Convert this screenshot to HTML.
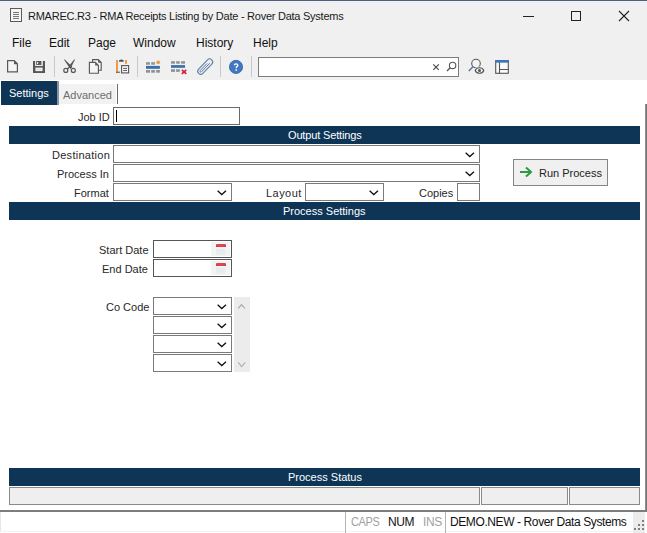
<!DOCTYPE html>
<html><head><meta charset="utf-8">
<style>
*{box-sizing:border-box;margin:0;padding:0}
html,body{width:647px;height:533px;overflow:hidden;background:#f0f0f0;font-family:"Liberation Sans",sans-serif;color:#000}
.a{position:absolute}
.t{position:absolute;white-space:pre;line-height:1}
.hdr{position:absolute;left:9px;width:631px;height:18px;background:#0e3556;color:#fff;font-size:11px}
.hdr span{position:absolute;white-space:pre;line-height:1}
.lbl{position:absolute;white-space:pre;line-height:1;font-size:11px;color:#282828;margin-top:-1px}
.inp{position:absolute;background:#fff;border:1px solid #7a7a7a;height:18px}
.sel{position:absolute;background:#fff;border:1px solid #7a7a7a;height:18px}
.chev{position:absolute;right:4px;top:6px}
.sep{position:absolute;top:56px;width:1px;height:21px;background:#b4b4b4}
.cell{position:absolute;top:487px;height:18px;background:#efefef;border:1px solid #8a8a8a}
</style></head><body>
<!-- top border -->
<div class="a" style="left:0;top:0;width:647px;height:1px;background:#525d74"></div>
<div class="a" style="left:0;top:1px;width:647px;height:1px;background:#eef4fb"></div>
<div class="a" style="left:0;top:2px;width:647px;height:1px;background:#e9ebf0"></div>

<!-- title icon -->
<svg class="a" style="left:9px;top:7px" width="15" height="17" viewBox="0 0 15 17">
<rect x="1.5" y="1.5" width="11" height="13" fill="#f6f6f6" stroke="#5a5a5a" stroke-width="1"/>
<path d="M4 5.5h6M4 7.5h6M4 9.5h6M4 11.5h6" stroke="#777" stroke-width="1"/>
</svg>
<div class="t" style="left:28px;top:11px;font-size:11px;color:#1a1a1a;letter-spacing:-0.25px">RMAREC.R3 - RMA Receipts Listing by Date - Rover Data Systems</div>

<!-- window controls -->
<div class="a" style="left:523px;top:16px;width:11px;height:1px;background:#222"></div>
<div class="a" style="left:571px;top:11px;width:10px;height:10px;border:1px solid #222"></div>
<svg class="a" style="left:618px;top:10px" width="12" height="12" viewBox="0 0 12 12"><path d="M1 1L11 11M11 1L1 11" stroke="#222" stroke-width="1.1"/></svg>

<!-- menu -->
<div class="t" style="left:12px;top:37px;font-size:12px;color:#111">File</div>
<div class="t" style="left:49px;top:37px;font-size:12px;color:#111">Edit</div>
<div class="t" style="left:88px;top:37px;font-size:12px;color:#111">Page</div>
<div class="t" style="left:133px;top:37px;font-size:12px;color:#111">Window</div>
<div class="t" style="left:196px;top:37px;font-size:12px;color:#111">History</div>
<div class="t" style="left:253px;top:37px;font-size:12px;color:#111">Help</div>

<!-- toolbar -->
<svg class="a" style="left:0;top:0" width="647" height="80" viewBox="0 0 647 80">
<!-- new -->
<path d="M7.6 60.6H14.2L17.4 63.8V71.9H7.6Z" fill="#f4f4f4" stroke="#595959" stroke-width="1.2"/>
<path d="M14 60.2V64.2H17.8Z" fill="#595959"/>
<!-- save -->
<path d="M33 61H45V73H33Z" fill="#565656"/>
<path d="M35.3 61H36V66.1H42V61H42.6V66.1H35.3Z" fill="#f0f0f0"/>
<path d="M35.3 61V66.1H42.6V61H41.4V64.9H36.2V61Z" fill="#f0f0f0"/>
<rect x="37" y="62" width="1.2" height="2.2" fill="#e6e6e6"/>
<rect x="35.4" y="67.6" width="7.2" height="3.5" fill="#f0f0f0"/>
<rect x="36.5" y="69" width="5" height="0.6" fill="#cfcfcf"/>
<!-- sep -->
<rect x="54" y="56" width="1" height="21" fill="#c9c9c9"/>
<!-- scissors -->
<path d="M63.9 59.5L64.8 59.5L72.4 67.1L70.3 69Z" fill="#565656"/>
<path d="M75 59.5L74.1 59.5L69.4 65.6L71.3 66.9Z" fill="#565656"/>
<path d="M67 69.2L69.6 66.9" stroke="#565656" stroke-width="1.3"/>
<circle cx="65.8" cy="70.4" r="2" fill="none" stroke="#585858" stroke-width="1.2"/>
<circle cx="73.3" cy="70.4" r="2" fill="none" stroke="#585858" stroke-width="1.2"/>
<!-- copy -->
<path d="M92.6 59.6H98.3L101.2 62.5V70.2H92.6Z" fill="#f4f4f4" stroke="#595959" stroke-width="1.15"/>
<path d="M98.1 59.3V62.7H101.5Z" fill="#595959"/>
<path d="M89.4 62.4H95.4L98.4 65.4V73.2H89.4Z" fill="#f4f4f4" stroke="#595959" stroke-width="1.15"/>
<path d="M95.2 62.1V65.6H98.7Z" fill="#595959"/>
<!-- paste -->
<rect x="116" y="60" width="2" height="11.8" fill="#ef9a3c"/>
<rect x="116" y="71.6" width="3.8" height="1.3" fill="#75624c"/>
<rect x="125" y="60" width="2" height="3.8" fill="#ef9a3c"/>
<path d="M119 61.7H123.7V60.6Q121.4 58.4 119 60.6Z" fill="#4a5560"/>
<rect x="121.6" y="65.6" width="7" height="7.3" fill="#f6f6f6" stroke="#555" stroke-width="1.1"/>
<path d="M123.3 68.4H127M123.3 70.5H127" stroke="#555" stroke-width="1"/>
<!-- sep -->
<rect x="137" y="56" width="1" height="21" fill="#c9c9c9"/>
<!-- insert row -->
<g fill="#939393">
<rect x="146" y="62.2" width="4" height="2.5"/><rect x="151.2" y="62.2" width="3.7" height="2.5"/>
<rect x="146" y="70" width="4" height="2.7"/><rect x="151.2" y="70" width="3.7" height="2.7"/><rect x="156.1" y="70" width="3.8" height="2.7"/>
</g>
<circle cx="158.2" cy="62.3" r="1.9" fill="#e8a050"/>
<rect x="146" y="65.9" width="13.9" height="2.9" fill="#3a6fae"/>
<!-- delete row -->
<g fill="#939393">
<rect x="171" y="61.2" width="4" height="2.5"/><rect x="176.1" y="61.2" width="3.7" height="2.5"/><rect x="181.1" y="61.2" width="3.9" height="2.5"/>
<rect x="171" y="69.2" width="4" height="2.7"/><rect x="176.1" y="69.2" width="3.7" height="2.7"/>
</g>
<rect x="171" y="65.1" width="14" height="2.7" fill="#3a6fae"/>
<path d="M181.8 69.8L186.3 73.8M186.3 69.8L181.8 73.8" stroke="#d21c3c" stroke-width="1.6"/>
<!-- paperclip -->
<g transform="translate(205.2 66.6) rotate(-46)">
<rect x="-9.4" y="-3" width="18.8" height="6" rx="3" fill="#e4edf8" stroke="#62799a" stroke-width="1"/>
<path d="M3.5 -0.9H-6.3A0.9 0.9 0 0 0 -6.3 0.9H5.5" fill="none" stroke="#62799a" stroke-width="0.9"/>
</g>
<!-- sep -->
<rect x="220" y="56" width="1" height="21" fill="#c9c9c9"/>
<!-- help -->
<circle cx="236" cy="66.9" r="6.6" fill="#4176c0" stroke="#3563a6" stroke-width="0.8"/>
<path d="M234.4 65.3Q234.4 63.9 236.1 63.9Q237.8 63.9 237.8 65.2Q237.8 66.1 236.8 66.6Q236.2 67 236.2 68.2" fill="none" stroke="#fff" stroke-width="1.3"/>
<rect x="235.5" y="69.3" width="1.5" height="1.5" fill="#fff"/>
<!-- sep -->
<rect x="251" y="56" width="1" height="21" fill="#c9c9c9"/>
<!-- search box -->
<rect x="258.5" y="57.5" width="200" height="19" fill="#fff" stroke="#7c7c7c" stroke-width="1"/>
<path d="M433.3 64.3L438.8 69.8M438.8 64.3L433.3 69.8" stroke="#444" stroke-width="1.1"/>
<circle cx="452.6" cy="65.4" r="3.2" fill="none" stroke="#555" stroke-width="1.1"/>
<path d="M450.2 67.8L447 71" stroke="#555" stroke-width="1.3"/>
<!-- mag eye -->
<circle cx="476" cy="63.6" r="4.3" fill="#f2f4f8" stroke="#585858" stroke-width="1.1"/>
<path d="M472.9 66.8L468.8 71.1" stroke="#5a78a6" stroke-width="1.5"/>
<path d="M475 70.5C476.3 66.6 482.7 66.6 484 70.5C482.7 74.4 476.3 74.4 475 70.5Z" fill="#f0f0f0" stroke="#f0f0f0" stroke-width="2.4"/>
<path d="M475.2 70.5C476.5 66.8 482.5 66.8 483.8 70.5C482.5 74.2 476.5 74.2 475.2 70.5Z" fill="#f0f0f0" stroke="#555" stroke-width="1.1"/>
<circle cx="479.5" cy="70.5" r="1.5" fill="#555"/>
<!-- layout -->
<rect x="495.7" y="60.6" width="12.6" height="12.7" fill="#fafafa" stroke="#555" stroke-width="1.1"/>
<rect x="495.2" y="60.1" width="13.6" height="2.6" fill="#3a78c0"/>
<path d="M499.5 62.6V73.5M499.5 69.5H508.5" stroke="#555" stroke-width="1.1"/>
</svg>

<!-- content white -->
<div class="a" style="left:0;top:80px;width:647px;height:431px;background:#fff"></div>
<!-- right vertical gray bar -->
<div class="a" style="left:645px;top:104px;width:2px;height:407px;background:linear-gradient(to right,#999,#6a6a6a)"></div>

<!-- tabs -->
<div class="a" style="left:1px;top:81px;width:56px;height:24px;background:#0e3556"></div>
<div class="a" style="left:57px;top:81px;width:1.5px;height:24px;background:#8594a3"></div>
<div class="t" style="left:9px;top:88px;font-size:11px;color:#fff">Settings</div>
<div class="a" style="left:59px;top:84px;width:57px;height:20px;background:#f2f2f2"></div>
<div class="a" style="left:116.5px;top:84px;width:1.5px;height:20px;background:#6a6a6a"></div>
<div class="t" style="left:63px;top:90px;font-size:11px;color:#6d6d6d">Advanced</div>

<!-- Job ID -->
<div class="lbl" style="left:78px;top:113px">Job ID</div>
<div class="inp" style="left:113px;top:107px;width:127px;border-color:#6a6a6a"></div>
<div class="a" style="left:116px;top:110px;width:1px;height:12px;background:#000"></div>

<!-- Output Settings -->
<div class="hdr" style="top:126px"><span style="left:279px;top:4px;letter-spacing:-0.15px">Output Settings</span></div>

<div class="lbl" style="left:52px;top:151px;letter-spacing:0.28px">Destination</div>
<div class="sel" style="left:113px;top:145px;width:367px"><svg class="chev" width="10" height="6" viewBox="0 0 10 6"><path d="M0.6 0.8L4.8 4.6L9 0.8" fill="none" stroke="#111" stroke-width="1.3"/></svg></div>
<div class="lbl" style="left:57px;top:170px">Process In</div>
<div class="sel" style="left:113px;top:164px;width:367px"><svg class="chev" width="10" height="6" viewBox="0 0 10 6"><path d="M0.6 0.8L4.8 4.6L9 0.8" fill="none" stroke="#111" stroke-width="1.3"/></svg></div>
<div class="lbl" style="left:74px;top:189px">Format</div>
<div class="sel" style="left:113px;top:183px;width:119px"><svg class="chev" width="10" height="6" viewBox="0 0 10 6"><path d="M0.6 0.8L4.8 4.6L9 0.8" fill="none" stroke="#111" stroke-width="1.3"/></svg></div>
<div class="lbl" style="left:266px;top:189px;letter-spacing:0.45px">Layout</div>
<div class="sel" style="left:305px;top:183px;width:79px"><svg class="chev" width="10" height="6" viewBox="0 0 10 6"><path d="M0.6 0.8L4.8 4.6L9 0.8" fill="none" stroke="#111" stroke-width="1.3"/></svg></div>
<div class="lbl" style="left:419px;top:189px">Copies</div>
<div class="inp" style="left:457px;top:183px;width:23px"></div>

<!-- Run process button -->
<div class="a" style="left:513px;top:159px;width:95px;height:27px;background:#f0f0f0;border:1px solid #858585"></div>
<svg class="a" style="left:519px;top:166px" width="14" height="12" viewBox="0 0 14 12"><path d="M1 6H12M7 1.5L12 6L7 10.5" fill="none" stroke="#2e9a3e" stroke-width="2"/></svg>
<div class="t" style="left:539px;top:168px;font-size:11px;color:#222">Run Process</div>

<!-- Process Settings -->
<div class="hdr" style="top:202px"><span style="left:274px;top:4px">Process Settings</span></div>

<div class="lbl" style="left:99px;top:246px">Start Date</div>
<div class="inp" style="left:153px;top:240px;width:79px;height:18px;border-color:#555"></div>
<svg class="a" style="left:211px;top:242px" width="19" height="14" viewBox="0 0 19 14"><rect x="0" y="0" width="19" height="14" fill="#f2f4f4"/><rect x="5" y="2" width="10" height="3" rx="1" fill="#dd4450"/><rect x="5" y="4" width="1.2" height="1" fill="#9a4048"/><rect x="13.8" y="4" width="1.2" height="1" fill="#9a4048"/><path d="M5 7.3H14.5M5 8.8H14.5M5 10.3H14.5M5 12H14.5" stroke="#dfe4e8" stroke-width="0.8"/></svg>
<div class="lbl" style="left:102px;top:265px">End Date</div>
<div class="inp" style="left:153px;top:259px;width:79px;height:18px;border-color:#555"></div>
<svg class="a" style="left:211px;top:261px" width="19" height="14" viewBox="0 0 19 14"><rect x="0" y="0" width="19" height="14" fill="#f2f4f4"/><rect x="5" y="2" width="10" height="3" rx="1" fill="#dd4450"/><rect x="5" y="4" width="1.2" height="1" fill="#9a4048"/><rect x="13.8" y="4" width="1.2" height="1" fill="#9a4048"/><path d="M5 7.3H14.5M5 8.8H14.5M5 10.3H14.5M5 12H14.5" stroke="#dfe4e8" stroke-width="0.8"/></svg>

<div class="lbl" style="left:106px;top:303px">Co Code</div>
<div class="sel" style="left:153px;top:297px;width:79px"><svg class="chev" width="10" height="6" viewBox="0 0 10 6"><path d="M0.6 0.8L4.8 4.6L9 0.8" fill="none" stroke="#111" stroke-width="1.3"/></svg></div>
<div class="sel" style="left:153px;top:316px;width:79px"><svg class="chev" width="10" height="6" viewBox="0 0 10 6"><path d="M0.6 0.8L4.8 4.6L9 0.8" fill="none" stroke="#111" stroke-width="1.3"/></svg></div>
<div class="sel" style="left:153px;top:335px;width:79px"><svg class="chev" width="10" height="6" viewBox="0 0 10 6"><path d="M0.6 0.8L4.8 4.6L9 0.8" fill="none" stroke="#111" stroke-width="1.3"/></svg></div>
<div class="sel" style="left:153px;top:354px;width:79px"><svg class="chev" width="10" height="6" viewBox="0 0 10 6"><path d="M0.6 0.8L4.8 4.6L9 0.8" fill="none" stroke="#111" stroke-width="1.3"/></svg></div>
<div class="a" style="left:234px;top:297px;width:16px;height:75px;background:#ececec"></div>
<svg class="a" style="left:234px;top:297px" width="16" height="75" viewBox="0 0 16 75"><path d="M4.3 11.4L7.5 7.6L10.9 11.4" fill="none" stroke="#a9a9a9" stroke-width="1.2"/><path d="M4.3 65.4L7.5 69.6L11.3 65.4" fill="none" stroke="#b0b0b0" stroke-width="1.2"/></svg>

<!-- Process Status -->
<div class="hdr" style="top:468px"><span style="left:279px;top:4px">Process Status</span></div>
<div class="cell" style="left:9px;width:471px"></div>
<div class="cell" style="left:481px;width:87px"></div>
<div class="cell" style="left:569px;width:71px"></div>

<!-- status bar -->
<div class="a" style="left:0;top:510px;width:647px;height:2px;background:#7d7d7d"></div>
<div class="a" style="left:0;top:512px;width:647px;height:21px;background:#fff"></div>
<div class="a" style="left:0;top:512px;width:1px;height:19px;background:#e6e6e6"></div>
<div class="a" style="left:0;top:531px;width:633px;height:1px;background:#f3f3f3"></div>
<div class="a" style="left:345px;top:512px;width:1px;height:21px;background:#b4b4b4"></div>
<div class="t" style="left:351px;top:516px;font-size:12px;color:#a0a0a0;letter-spacing:-0.4px;transform:scaleX(0.915);transform-origin:0 0">CAPS</div>
<div class="t" style="left:388px;top:516px;font-size:12px;color:#111;letter-spacing:-0.4px">NUM</div>
<div class="t" style="left:423px;top:516px;font-size:12px;color:#a0a0a0;letter-spacing:-0.4px">INS</div>
<div class="a" style="left:445px;top:512px;width:1px;height:21px;background:#b4b4b4"></div>
<div class="t" style="left:450px;top:516px;font-size:12px;color:#111;letter-spacing:-0.4px">DEMO.NEW - Rover Data Systems</div>
<div class="a" style="left:633px;top:512px;width:12px;height:21px;background:#ececec"></div>
<svg class="a" style="left:633px;top:512px" width="14" height="21" viewBox="0 0 14 21"><g fill="#808080"><rect x="9" y="8" width="2" height="2"/><rect x="5" y="12" width="2" height="2"/><rect x="9" y="12" width="2" height="2"/><rect x="1" y="16" width="2" height="2"/><rect x="5" y="16" width="2" height="2"/><rect x="9" y="16" width="2" height="2"/></g></svg>
</body></html>
